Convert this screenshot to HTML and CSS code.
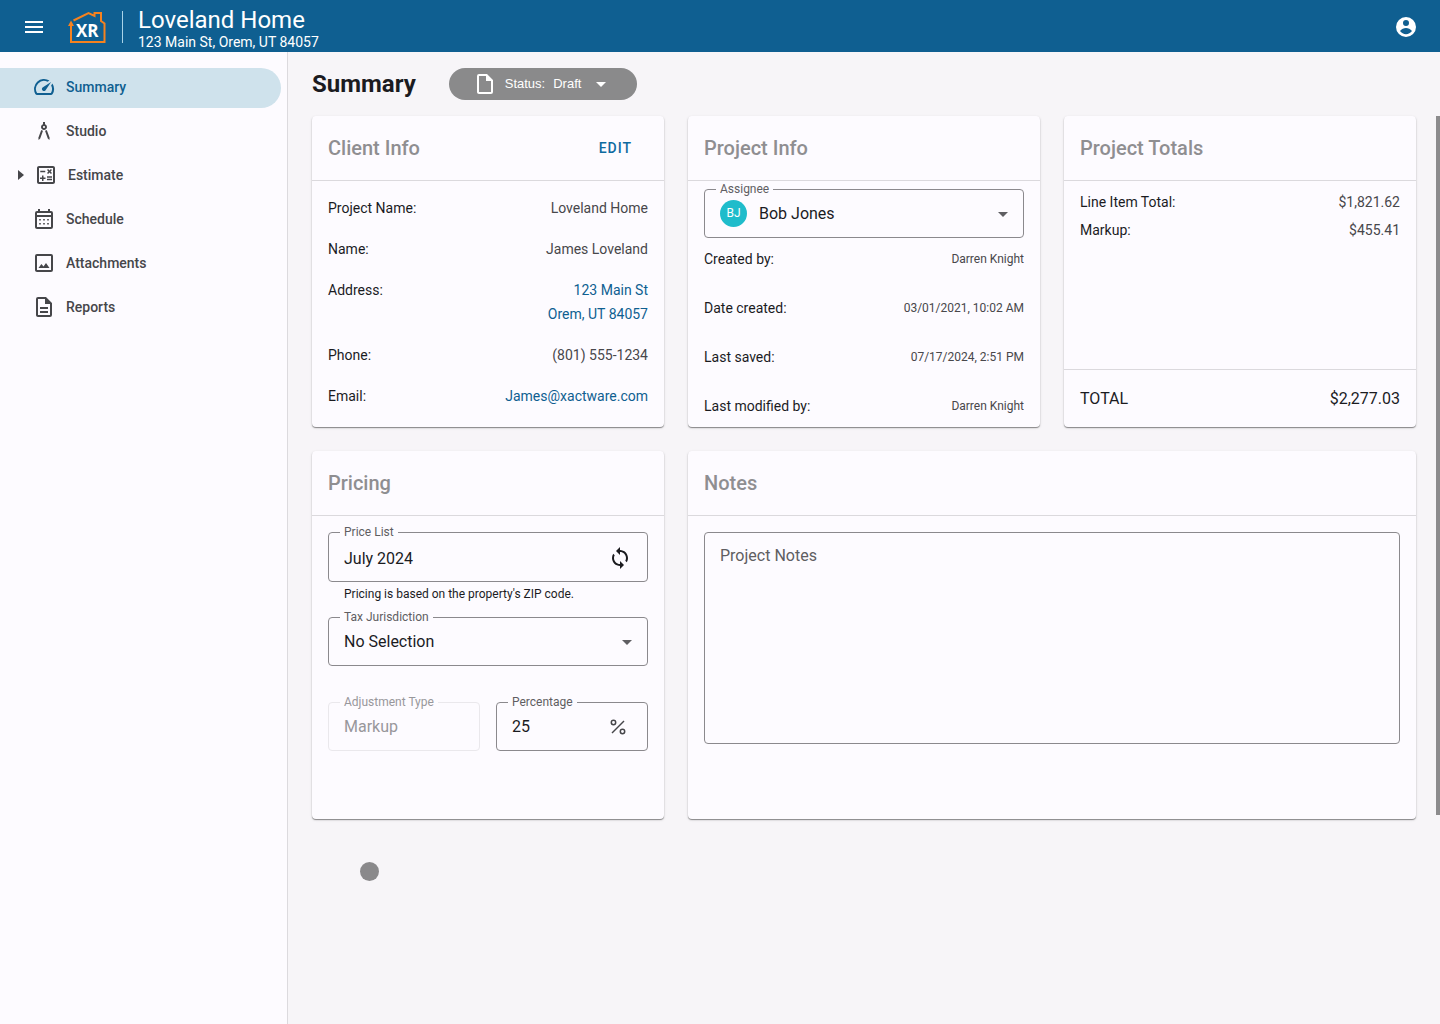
FILE: index.html
```html
<!DOCTYPE html>
<html lang="en">
<head>
<meta charset="utf-8">
<meta name="viewport" content="width=device-width, initial-scale=1">
<title>Loveland Home – Summary</title>
<link rel="stylesheet" href="styles.css">
</head>
<body>
<header class="topbar">
  <button class="icon-button" type="button" aria-label="Menu">
    <svg class="icon" viewBox="0 0 24 24"><path d="M3 18h18v-2H3v2zm0-5h18v-2H3v2zm0-7v2h18V6H3z"/></svg>
  </button>
  <svg class="logo" viewBox="0 0 38 34" role="img" aria-label="XR">
    <path class="logo-house" d="M5.500 10.500 20.500 3 26.500 6V3H33v8l3.500 2.500V32H3V15"/>
    <path class="logo-arrow" d="M0 16 3 10.500 6 16z"/>
    <text class="logo-text" x="8" y="27">XR</text>
  </svg>
  <div class="project">
    <div class="project-name">Loveland Home</div>
    <div class="project-address">123 Main St, Orem, UT 84057</div>
  </div>
  <button class="icon-button account" type="button" aria-label="Account">
    <svg class="icon" viewBox="0 0 24 24"><path fill-rule="evenodd" d="M12 2a10 10 0 1 0 0 20 10 10 0 0 0 0-20zm0 3a3 3 0 1 1 0 6 3 3 0 0 1 0-6zM6 16c1.500-2 3.800-3.100 6-3.100s4.500 1.100 6 3.100c-1.400 2-3.600 3.200-6 3.200S7.400 18 6 16z"/></svg>
  </button>
</header>

<div class="shell">
  <nav class="sidebar" aria-label="Project">
    <a class="nav-item active" href="#summary" aria-current="page">
      <svg class="icon" viewBox="0 0 24 24"><path d="M20.380 8.570l-1.230 1.850a8 8 0 0 1-.22 7.580H5.070A8 8 0 0 1 15.580 6.850l1.850-1.230A10 10 0 0 0 3.350 19a2 2 0 0 0 1.720 1h13.850a2 2 0 0 0 1.740-1 10 10 0 0 0-.27-10.440zM10.590 15.410a2 2 0 0 0 2.830 0l5.660-8.490-8.490 5.660a2 2 0 0 0 0 2.830z"/></svg>
      Summary
    </a>
    <a class="nav-item" href="#studio">
      <svg class="icon" viewBox="0 0 24 24"><path d="M6.360 18.780 6.610 21l1.620-1.540 2.770-7.600c-.68-.17-1.280-.51-1.770-.98l-2.870 7.900zM14.770 10.880c-.49.47-1.100.81-1.770.98l2.770 7.600L17.390 21l.26-2.220-2.880-7.900zM15 8c0-1.300-.84-2.400-2-2.820V3h-2v2.180C9.840 5.600 9 6.700 9 8c0 1.660 1.340 3 3 3s3-1.340 3-3zm-3 1c-.55 0-1-.45-1-1s.45-1 1-1 1 .45 1 1-.45 1-1 1z"/></svg>
      Studio
    </a>
    <a class="nav-item expandable" href="#estimate">
      <svg class="caret" viewBox="0 0 6 10"><path d="M0 0l6 5-6 5z"/></svg>
      <svg class="icon" viewBox="0 0 24 24"><path d="M19 3H5c-1.100 0-2 .9-2 2v14c0 1.100.9 2 2 2h14c1.100 0 2-.9 2-2V5c0-1.100-.9-2-2-2zm0 16H5V5h14v14zM6.250 7.720h5v1.500h-5zM13 15.750h5v1.500h-5zM13 13.250h5v1.500h-5zM8 18h1.500v-2h2v-1.500h-2v-2H8v2H6V16h2zM14.090 10.950l1.410-1.410 1.410 1.410 1.060-1.060-1.410-1.420 1.410-1.410L16.910 6 15.500 7.410 14.090 6l-1.060 1.060 1.410 1.410-1.410 1.420z"/></svg>
      Estimate
    </a>
    <a class="nav-item" href="#schedule">
      <svg class="icon" viewBox="0 0 24 24"><path d="M19 4h-1V2h-2v2H8V2H6v2H5a2 2 0 0 0-2 2v14c0 1.100.9 2 2 2h14a2 2 0 0 0 2-2V6a2 2 0 0 0-2-2zm0 16H5V10h14v10zm0-12H5V6h14v2zM7.200 12h1.600v1.600H7.200zm4 0h1.600v1.600h-1.600zm4 0h1.600v1.600h-1.600zm-8 4h1.600v1.600H7.200zm4 0h1.600v1.600h-1.600zm4 0h1.600v1.600h-1.600z"/></svg>
      Schedule
    </a>
    <a class="nav-item" href="#attachments">
      <svg class="icon" viewBox="0 0 24 24"><path d="M19 5v14H5V5h14m0-2H5a2 2 0 0 0-2 2v14c0 1.100.9 2 2 2h14a2 2 0 0 0 2-2V5a2 2 0 0 0-2-2zM6.500 17l2.900-4 2.100 2.600 2.500-3.600 3.500 5z"/></svg>
      Attachments
    </a>
    <a class="nav-item" href="#reports">
      <svg class="icon" viewBox="0 0 24 24"><path d="M8 16h8v2H8zm0-4h8v2H8zm6-10H6a2 2 0 0 0-2 2v16c0 1.100.9 2 2 2h12a2 2 0 0 0 2-2V8l-6-6zm4 18H6V4h7v5h5v11z"/><path d="M13 3v6h6z"/></svg>
      Reports
    </a>
  </nav>

  <main class="main">
    <div class="page-head">
      <h1 class="page-title">Summary</h1>
      <button class="status" type="button">
        <svg class="icon" viewBox="0 0 24 24"><path d="M14 2H6a2 2 0 0 0-2 2v16c0 1.100.9 2 2 2h12a2 2 0 0 0 2-2V8l-6-6zm4 18H6V4h7v5h5v11z"/><path d="M13 3v6h6z"/></svg>
        <span class="status-text"><span>Status:</span><span>Draft</span></span>
        <svg class="icon" viewBox="0 0 24 24"><path d="M7 10l5 5 5-5z"/></svg>
      </button>
    </div>

    <div class="scroll">
      <div class="cards">
        <section class="card">
          <div class="card-head">
            <h2 class="card-title">Client Info</h2>
            <button class="text-button" type="button">EDIT</button>
          </div>
          <dl class="rows client-rows">
            <div class="row"><dt>Project Name:</dt><dd>Loveland Home</dd></div>
            <div class="row"><dt>Name:</dt><dd>James Loveland</dd></div>
            <div class="row"><dt>Address:</dt><dd><a class="link" href="#map">123 Main St<br>Orem, UT 84057</a></dd></div>
            <div class="row"><dt>Phone:</dt><dd>(801) 555-1234</dd></div>
            <div class="row"><dt>Email:</dt><dd><a class="link" href="mailto:James@xactware.com">James@xactware.com</a></dd></div>
          </dl>
        </section>

        <section class="card">
          <div class="card-head"><h2 class="card-title">Project Info</h2></div>
          <div class="info-body">
            <fieldset class="field">
              <legend><label for="assignee">Assignee</label></legend>
              <div class="control">
                <span class="avatar" aria-hidden="true">BJ</span>
                <div class="select-wrap">
                  <select class="input" id="assignee"><option>Bob Jones</option></select>
                  <svg class="icon" viewBox="0 0 24 24"><path d="M7 10l5 5 5-5z"/></svg>
                </div>
              </div>
            </fieldset>
            <dl class="rows info-rows">
              <div class="row"><dt>Created by:</dt><dd>Darren Knight</dd></div>
              <div class="row"><dt>Date created:</dt><dd>03/01/2021, 10:02 AM</dd></div>
              <div class="row"><dt>Last saved:</dt><dd>07/17/2024, 2:51 PM</dd></div>
              <div class="row"><dt>Last modified by:</dt><dd>Darren Knight</dd></div>
            </dl>
          </div>
        </section>

        <section class="card">
          <div class="card-head"><h2 class="card-title">Project Totals</h2></div>
          <dl class="rows total-rows">
            <div class="row"><dt>Line Item Total:</dt><dd>$1,821.62</dd></div>
            <div class="row"><dt>Markup:</dt><dd>$455.41</dd></div>
          </dl>
          <div class="total"><span>TOTAL</span><span>$2,277.03</span></div>
        </section>

        <section class="card">
          <div class="card-head"><h2 class="card-title">Pricing</h2></div>
          <div class="pricing-body">
            <fieldset class="field">
              <legend><label for="price-list">Price List</label></legend>
              <div class="control roomy">
                <input class="input" id="price-list" type="text" value="July 2024" aria-describedby="price-hint">
                <button class="icon-button refresh" type="button" aria-label="Refresh price list">
                  <svg class="icon" viewBox="0 0 24 24"><path d="M12 4V1L8 5l4 4V6c3.310 0 6 2.690 6 6 0 1.010-.25 1.970-.7 2.800l1.460 1.460C19.540 15.030 20 13.570 20 12c0-4.420-3.580-8-8-8zm0 14c-3.310 0-6-2.690-6-6 0-1.010.25-1.970.7-2.800L5.240 7.740C4.460 8.970 4 10.430 4 12c0 4.420 3.580 8 8 8v3l4-4-4-4v3z"/></svg>
                </button>
              </div>
            </fieldset>
            <p class="hint" id="price-hint">Pricing is based on the property's ZIP code.</p>
            <fieldset class="field">
              <legend><label for="tax">Tax Jurisdiction</label></legend>
              <div class="control">
                <div class="select-wrap">
                  <select class="input" id="tax"><option>No Selection</option></select>
                  <svg class="icon" viewBox="0 0 24 24"><path d="M7 10l5 5 5-5z"/></svg>
                </div>
              </div>
            </fieldset>
            <div class="field-pair">
              <fieldset class="field disabled">
                <legend><label for="adjustment">Adjustment Type</label></legend>
                <div class="control"><input class="input" id="adjustment" type="text" value="Markup" disabled></div>
              </fieldset>
              <fieldset class="field">
                <legend><label for="percentage">Percentage</label></legend>
                <div class="control percent">
                  <input class="input" id="percentage" type="text" value="25">
                  <svg class="icon percent-icon" viewBox="0 0 24 24"><path d="M6 18 18 6"/><circle cx="7.500" cy="7.500" r="2.200"/><circle cx="16.500" cy="16.500" r="2.200"/></svg>
                </div>
              </fieldset>
            </div>
          </div>
        </section>

        <section class="card wide">
          <div class="card-head"><h2 class="card-title">Notes</h2></div>
          <div class="notes-body">
            <textarea class="notes" aria-label="Project Notes" placeholder="Project Notes"></textarea>
          </div>
        </section>
      </div>
      <div class="scroll-thumb"></div>
    </div>
  </main>
</div>
<div class="pointer"></div>
</body>
</html>
```
FILE: styles.css
```css
* { box-sizing: border-box; }

body {
  margin: 0;
  min-height: 100vh;
  display: flex;
  flex-direction: column;
  background: #f7f5f8;
  color: #1b1b1f;
  font: 14px/24px Roboto, "Liberation Sans", sans-serif;
}

h1, h2, p, dl, dd { margin: 0; }
button, input, select, textarea { font: inherit; color: inherit; }
a { color: inherit; text-decoration: none; }

.icon { width: 24px; height: 24px; flex: none; fill: currentColor; }

.icon-button {
  display: flex;
  padding: 0;
  border: 0;
  background: none;
}

/* Top bar */
.topbar {
  height: 52px;
  padding: 2px 22px 0;
  display: flex;
  align-items: center;
  background: #0f5f91;
  color: #fff;
}
.logo { width: 38px; height: 34px; margin-left: 22px; }
.logo-house { fill: none; stroke: #f5821f; stroke-width: 2; }
.logo-arrow { fill: #f5821f; }
.logo-text { fill: #fff; font: 700 17px "Open Sans", sans-serif; }
.project {
  display: flex;
  flex-direction: column;
  margin-left: 16px;
  position: relative;
  padding: 2px 0 0 16px;
}
.project::before {
  content: "";
  position: absolute;
  left: 0;
  top: 7px;
  bottom: 7px;
  width: 1px;
  background: #a9d3e8;
}
.project-name { font-size: 24px; line-height: 28px; }
.project-address { font-size: 14px; line-height: 16px; }
.account { margin-left: auto; }

/* Layout */
.shell { flex: 1; display: flex; }

.sidebar {
  width: 288px;
  flex: none;
  padding: 16px 6px 16px 0;
  display: flex;
  flex-direction: column;
  gap: 4px;
  border-right: 1px solid #dcdade;
  background: #fdfbff;
}
.nav-item {
  height: 40px;
  padding: 0 32px 2px;
  display: flex;
  align-items: center;
  gap: 10px;
  border-radius: 0 20px 20px 0;
  color: #46464a;
  font-weight: 500;
}
.nav-item.active { background: #cfe2ec; color: #0f5f91; }
.nav-item.expandable { padding-left: 18px; }
.caret { width: 6px; height: 10px; fill: currentColor; }

.main { flex: 1; min-width: 0; display: flex; flex-direction: column; }
.page-head {
  padding: 16px 24px;
  display: flex;
  align-items: center;
  gap: 33px;
}
.page-title { font-size: 24px; line-height: 32px; font-weight: 700; }
.status {
  height: 32px;
  padding: 0 24px;
  display: flex;
  align-items: center;
  gap: 8px;
  border: 0;
  border-radius: 16px;
  background: #8a8a8b;
  color: #fff;
  font-family: "Liberation Sans", Arial, sans-serif;
  font-size: 13px;
}
.status-text { display: flex; gap: 8px; }

.scroll { flex: 1; position: relative; }
.scroll-thumb {
  position: absolute;
  top: 0;
  right: 0;
  width: 4px;
  height: 77%;
  background: #8c8b8d;
}

.cards {
  padding: 0 24px 24px;
  display: grid;
  grid-template-columns: repeat(3, minmax(0, 1fr));
  gap: 24px;
}
.card {
  display: flex;
  flex-direction: column;
  border-radius: 4px;
  background: #fdfbff;
  box-shadow: 0 1px 1px rgba(0, 0, 0, .4), 0 1px 3px rgba(0, 0, 0, .12);
}
.card.wide { grid-column: span 2; }
.card-head {
  height: 65px;
  padding: 0 16px;
  display: flex;
  align-items: center;
  justify-content: space-between;
  border-bottom: 1px solid #dbd9dd;
}
.card-title { font-size: 20px; line-height: 24px; font-weight: 500; color: #8f8e91; }
.text-button {
  padding: 0 16px;
  border: 0;
  background: none;
  color: #0e6aa0;
  font-weight: 500;
  letter-spacing: 1px;
}

/* Label and value rows */
.rows { display: flex; flex-direction: column; }
.row { display: flex; justify-content: space-between; }
.row dd { color: #48474b; text-align: right; }
.row .link { color: #0f5f91; }
.client-rows { padding: 15px 16px 16px; gap: 17px; }
.info-body { padding: 0 16px 9px; }
.info-rows { padding-top: 9px; gap: 25px; }
.info-rows dd { font-size: 12px; }
.total-rows { flex: 1; padding: 9px 16px; gap: 4px; }
.total {
  padding: 17px 16px 16px;
  display: flex;
  justify-content: space-between;
  border-top: 1px solid #dbd9dd;
  font-size: 16px;
}

/* Outlined fields */
.field {
  min-width: 0;
  margin: 0;
  padding: 0 8px 0 11px;
  border: 1px solid #8b898d;
  border-radius: 4px;
}
.field legend {
  padding: 0 4px;
  font-size: 12px;
  line-height: 16px;
  color: #5f5e62;
}
.control {
  height: 40px;
  padding: 0 0 7px 4px;
  display: flex;
  align-items: center;
  gap: 12px;
}
.control.roomy { height: 41px; padding-bottom: 5px; }
.input {
  width: 100%;
  min-width: 0;
  height: 32px;
  padding: 0;
  border: 0;
  outline: 0;
  appearance: none;
  background: none;
  font-size: 16px;
}
.select-wrap { flex: 1; display: grid; align-items: center; color: #1b1b1f; }
.select-wrap > * { grid-area: 1 / 1; }
.select-wrap .icon { justify-self: end; fill: #5f5e62; pointer-events: none; }
.avatar {
  width: 27px;
  height: 27px;
  flex: none;
  border-radius: 50%;
  background: #1fbccb;
  color: #fff;
  font-size: 12px;
  line-height: 27px;
  text-align: center;
}
.refresh { padding-right: 7px; }
.percent { padding-right: 9px; }
.percent-icon { fill: none; stroke: #46464a; stroke-width: 1.5; }
.disabled { border-color: #eae8ec; }
.disabled legend, .disabled .input { color: #98979b; }

.pricing-body { padding: 8px 16px 68px; }
.hint { padding: 4px 16px 7px; font-size: 12px; line-height: 16px; }
.field-pair {
  margin-top: 28px;
  display: grid;
  grid-template-columns: 1fr 1fr;
  gap: 16px;
}

.notes-body { padding: 16px; }
.notes {
  display: block;
  width: 100%;
  height: 212px;
  padding: 11px 15px;
  border: 1px solid #8b898d;
  border-radius: 4px;
  background: none;
  resize: none;
  font-size: 16px;
}
.notes::placeholder { color: #5f5e62; opacity: 1; }

.pointer {
  position: absolute;
  left: 360px;
  top: 862px;
  width: 19px;
  height: 19px;
  border-radius: 50%;
  background: #8a898b;
}
```
